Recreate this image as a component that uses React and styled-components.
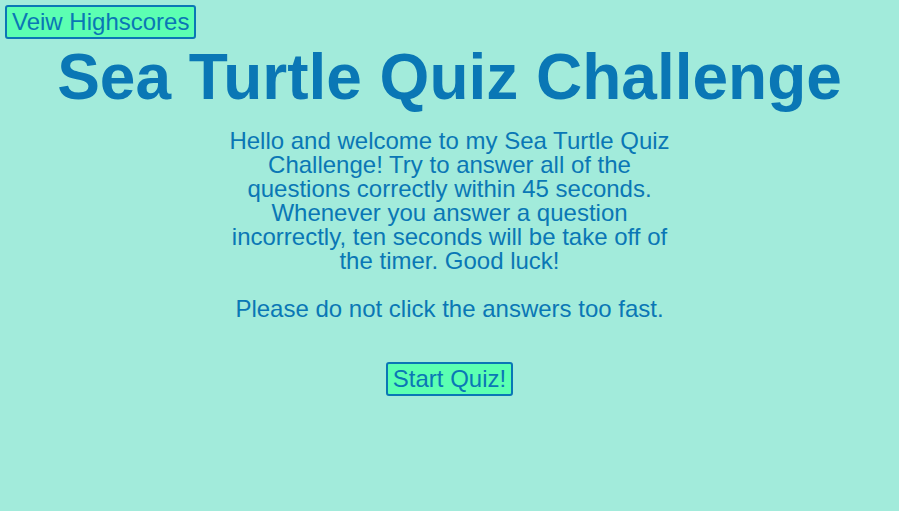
import React from 'react';
import styled, {createGlobalStyle} from 'styled-components';

const GlobalStyle = createGlobalStyle`
  html, body {
    margin: 0;
    padding: 0;
    background: #a2ebdb;
  }

  body {
    font-family: "Liberation Sans", Arial, sans-serif;
    color: #0a77b5;
  }
`;

export default function App() {
  return (
    <>
      <GlobalStyle/>
      <Page>
        <Header>
          <Button>Veiw Highscores</Button>
        </Header>
        <Title>Sea Turtle Quiz Challenge</Title>
        <Intro>
          <p>
            Hello and welcome to my Sea Turtle Quiz Challenge! Try to answer all of the
            questions correctly within 45 seconds. Whenever you answer a question
            incorrectly, ten seconds will be take off of the timer. Good luck!
          </p>
          <p>Please do not click the answers too fast.</p>
        </Intro>
        <StartButton>Start Quiz!</StartButton>
      </Page>
    </>
  );
}

// ---- Styled

const Page = styled.div`
  display: flex;
  flex-direction: column;
  align-items: center;
  min-height: 511px;
  padding: 5px;
  box-sizing: border-box;
`;

const Header = styled.div`
  align-self: stretch;
  display: flex;
`;

const Button = styled.button`
  font-family: "Liberation Sans", Arial, sans-serif;
  font-size: 24px;
  line-height: 27px;
  color: #0a77b5;
  background: #5cffb2;
  border: 2px solid #0a77b5;
  border-radius: 3px;
  padding: 1px 5px 2px;
  cursor: pointer;
`;

const StartButton = styled(Button)`
  margin-top: 17px;
`;

const Title = styled.h1`
  font-size: 64px;
  font-weight: bold;
  line-height: 64px;
  margin: 6px 0 0;
`;

const Intro = styled.div`
  width: 450px;
  margin-top: 20px;
  text-align: center;
  font-size: 24px;
  line-height: 24px;

  p {
    margin: 0 0 24px;
  }
`;
